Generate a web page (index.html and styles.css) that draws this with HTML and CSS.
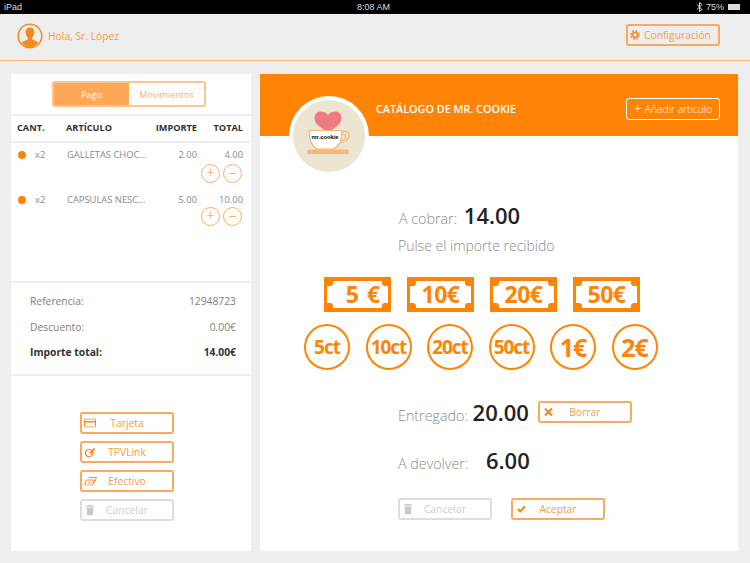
FILE: index.html
```html
<!DOCTYPE html>
<html lang="es">
<head>
    <meta charset="UTF-8">
    <title>Caja</title>
    <link rel="stylesheet" href="styles.css">
</head>
<body>
    <svg class="defs" width="0" height="0">
        <symbol id="bill-frame" viewBox="0 0 67 35">
            <path fill="#ff8405" fill-rule="evenodd" d="M0 0H67V35H0ZM7 4a4 4 0 0 1-4 4V27a4 4 0 0 1 4 4H60a4 4 0 0 1 4-4V8a4 4 0 0 1-4-4Z"/>
            <path fill="#ff8405" d="M3 3h6v3a3 3 0 0 1-3 3H3ZM58 3h6v6h-3a3 3 0 0 1-3-3ZM3 26h3a3 3 0 0 1 3 3v3H3ZM61 26h3v6h-6v-3a3 3 0 0 1 3-3Z"/>
        </symbol>
        <symbol id="trash" viewBox="0 0 8 11">
            <path fill="#c9c9c9" d="M3 0h2l.5 1H8v1.200H0V1h2.500ZM.6 3h6.800l-.5 8H1.100Z"/>
        </symbol>
    </svg>

    <div class="status-bar">
        <span class="status-left">iPad</span>
        <span class="status-time">8:08 AM</span>
        <span class="status-right">
            <svg width="7" height="10" viewBox="0 0 7 10"><path fill="none" stroke="#ddd" d="M1 2.500l5 5L3.500 9.500V.5L6 2.500l-5 5"/></svg>
            75%
            <span class="battery"></span>
        </span>
    </div>

    <header class="top-bar">
        <div class="greeting">
            <svg width="26" height="26" viewBox="0 0 26 26">
                <circle cx="13" cy="13" r="11.800" fill="none" stroke="#f58a1f" stroke-width="1.500"/>
                <path fill="#f58a1f" d="M13 4.500c3 0 4.500 2.300 4.300 5-.2 2.400-1 4.200-2.100 5.300v1.600c2.500 1 5 1.800 6 3.400A11.500 11.500 0 0 1 13 24.500a11.500 11.500 0 0 1-8.200-4.700c1-1.600 3.500-2.400 6-3.400v-1.600C9.700 13.700 8.900 11.900 8.700 9.500c-.2-2.700 1.300-5 4.300-5Z"/>
            </svg>
            <span>Hola, Sr. López</span>
        </div>
        <button class="btn btn-config">
            <svg width="10" height="10" viewBox="0 0 11 11">
                <circle cx="5.500" cy="5.500" r="4.200" fill="none" stroke="#f58a1f" stroke-width="2.400" stroke-dasharray="1.650 1.650"/>
                <circle cx="5.500" cy="5.500" r="2.800" fill="none" stroke="#f58a1f" stroke-width="1.600"/>
            </svg>
            Configuración
        </button>
    </header>

    <main class="content">
        <section class="card order">
            <div class="tabs-row">
                <div class="tabs">
                    <span class="tab tab-active">Pago</span>
                    <span class="tab">Movimientos</span>
                </div>
            </div>
            <div class="row head-row">
                <span class="col-qty">CANT.</span>
                <span class="col-name">ARTÍCULO</span>
                <span class="col-price">IMPORTE</span>
                <span class="col-total">TOTAL</span>
            </div>
            <div class="items">
                <div class="item">
                    <div class="row">
                        <span class="col-qty"><i class="dot"></i>x2</span>
                        <span class="col-name">GALLETAS CHOC...</span>
                        <span class="col-price">2.00</span>
                        <span class="col-total">4.00</span>
                    </div>
                    <div class="stepper">
                        <span class="round">+</span>
                        <span class="round">−</span>
                    </div>
                </div>
                <div class="item">
                    <div class="row">
                        <span class="col-qty"><i class="dot"></i>x2</span>
                        <span class="col-name">CAPSULAS NESC...</span>
                        <span class="col-price">5.00</span>
                        <span class="col-total">10.00</span>
                    </div>
                    <div class="stepper">
                        <span class="round">+</span>
                        <span class="round">−</span>
                    </div>
                </div>
            </div>
            <div class="summary">
                <div class="sum-row"><span>Referencia:</span><span>12948723</span></div>
                <div class="sum-row"><span>Descuento:</span><span>0.00€</span></div>
                <div class="sum-row sum-total"><span>Importe total:</span><span>14.00€</span></div>
            </div>
            <div class="pay-buttons">
                <button class="btn btn-wide">
                    <svg class="btn-icon" width="12" height="9" viewBox="0 0 12 9"><rect x=".5" y=".5" width="11" height="8" rx="1" fill="none" stroke="#f58a1f"/><rect x="1" y="2.500" width="10" height="1.500" fill="#f58a1f"/></svg>
                    Tarjeta
                </button>
                <button class="btn btn-wide">
                    <svg class="btn-icon" width="12" height="10" viewBox="0 0 12 10"><circle cx="5" cy="6" r="3.500" fill="none" stroke="#f58a1f" stroke-width="1.200"/><path fill="#f58a1f" d="M5 6l5-5 1.500 1L7 7Z"/></svg>
                    TPVLink
                </button>
                <button class="btn btn-wide">
                    <svg class="btn-icon" width="13" height="9" viewBox="0 0 13 9"><path fill="none" stroke="#f58a1f" d="M2.500 3.500h8l-2 5h-8ZM4.500 1h8l-2 5"/><circle cx="5.500" cy="6" r="1" fill="#f58a1f"/></svg>
                    Efectivo
                </button>
                <button class="btn btn-wide btn-off">
                    <svg class="btn-icon icon-inset" width="8" height="11"><use href="#trash"/></svg>
                    Cancelar
                </button>
            </div>
        </section>

        <section class="card catalog">
            <div class="catalog-head">
                <h2>CATÁLOGO DE MR. COOKIE</h2>
                <button class="btn btn-add"><span class="plus">+</span> Añadir artículo</button>
            </div>
            <div class="logo">
                <svg width="72" height="72" viewBox="0 0 72 72">
                    <circle cx="36" cy="36" r="36" fill="#ece5d2"/>
                    <path fill="#ee7b80" d="M35 32c-8-4.500-13.500-8.500-13.500-14 0-4 3-6.500 6.500-6.500 3 0 5.500 1.500 7 3.500 1.500-2 4-3.500 7-3.500 3.500 0 6.500 2.500 6.500 6.500 0 5.500-5.500 9.500-13.500 14Z"/>
                    <path fill="#fff" stroke="#f6b56d" stroke-width="1.200" d="M16 30.500h33c0 8-2.500 17-9.500 18.500h-14C18.500 47.500 16 38.500 16 30.500Z"/>
                    <path fill="none" stroke="#f6b56d" stroke-width="1.200" d="M49 32c4-1.500 7.500.5 7 4.500-.5 3-3.500 5-8 6.500M49 34.500c2.500-.5 4 .5 3.800 2.500-.2 2-2 3-4.800 4"/>
                    <rect x="14" y="49.500" width="42" height="4.500" rx="2.200" fill="#f8b873"/>
                    <text x="32" y="39" class="logo-text">mr.cookie</text>
                </svg>
            </div>
            <div class="till">
                <p class="line line-due">A cobrar: <b>14.00</b></p>
                <p class="hint">Pulse el importe recibido</p>
                <div class="bills">
                    <div class="bill"><svg><use href="#bill-frame"/></svg><span class="bill-five">5 €</span></div>
                    <div class="bill"><svg><use href="#bill-frame"/></svg><span>10€</span></div>
                    <div class="bill"><svg><use href="#bill-frame"/></svg><span>20€</span></div>
                    <div class="bill"><svg><use href="#bill-frame"/></svg><span>50€</span></div>
                </div>
                <div class="coins">
                    <span class="coin">5ct</span>
                    <span class="coin">10ct</span>
                    <span class="coin">20ct</span>
                    <span class="coin">50ct</span>
                    <span class="coin coin-euro">1€</span>
                    <span class="coin coin-euro">2€</span>
                </div>
                <div class="amount-row delivered">
                    <p class="line line-paid">Entregado: <b>20.00</b></p>
                    <button class="btn btn-wide">
                        <svg class="btn-icon icon-inset" width="9" height="9" viewBox="0 0 9 9"><path stroke="#f58a1f" stroke-width="2.400" d="M1 1l7 7M8 1L1 8"/></svg>
                        Borrar
                    </button>
                </div>
                <p class="line change">A devolver: <b>6.00</b></p>
                <div class="actions">
                    <button class="btn btn-wide btn-off">
                        <svg class="btn-icon icon-inset" width="8" height="11"><use href="#trash"/></svg>
                        Cancelar
                    </button>
                    <button class="btn btn-wide">
                        <svg class="btn-icon icon-inset" width="9" height="8" viewBox="0 0 11 9"><path fill="none" stroke="#f58a1f" stroke-width="2.600" d="M1 4.500l3 3 6-6.500"/></svg>
                        Aceptar
                    </button>
                </div>
            </div>
        </section>
    </main>
</body>
</html>
```

FILE: styles.css
```css
* {
    box-sizing: border-box;
}
html, body {
    margin: 0;
    padding: 0;
}
body {
    width: 750px;
    height: 563px;
    overflow: hidden;
    background-color: #eeeeee;
    font-family: "Open Sans", "Noto Sans", sans-serif;
    color: #333;
}
p, h2 {
    margin: 0;
}
.defs {
    display: block;
    height: 0;
}

/* status bar */
.status-bar {
    height: 14px;
    background-color: #000;
    color: #ddd;
    font-family: "Liberation Sans", sans-serif;
    font-size: 9px;
    line-height: 14px;
    display: grid;
    grid-template-columns: 1fr auto 1fr;
    padding: 0 10px 0 4px;
}
.status-time {
    margin-left: 3px;
}
.status-right {
    justify-self: end;
    display: flex;
    align-items: center;
    gap: 3px;
}
.battery {
    width: 12px;
    height: 6px;
    background-color: #ddd;
    margin-left: 1px;
}

/* top bar */
.top-bar {
    height: 47px;
    border-bottom: 1px solid #f7b877;
    display: flex;
    align-items: center;
    justify-content: space-between;
    padding: 0 30px 3px 17px;
}
.greeting {
    display: flex;
    align-items: center;
    gap: 5px;
    font-size: 10.300px;
    color: #f79a45;
}
.btn {
    height: 22px;
    padding: 0;
    border: 2px solid #f9aa62;
    border-radius: 3px;
    background-color: #fff;
    color: #f79a45;
    font-family: inherit;
    font-size: 10.300px;
    display: flex;
    align-items: center;
    justify-content: center;
}
.btn-config {
    width: 94px;
    background-color: transparent;
    justify-content: flex-start;
    padding-left: 2px;
    gap: 4px;
    margin-bottom: 1px;
}
.btn-wide {
    width: 94px;
    position: relative;
}
.btn-icon {
    position: absolute;
    left: 2px;
    top: 50%;
    transform: translateY(-50%);
}
.icon-inset {
    left: 4px;
}
.btn-off {
    border-color: #dedede;
    color: #cfcfcf;
}

/* columns */
.content {
    display: flex;
    gap: 9px;
    padding: 13px 12px 12px 11px;
}
.card {
    background-color: #fff;
    height: 477px;
}
.order {
    width: 240px;
    flex: none;
    display: flex;
    flex-direction: column;
}
.tabs-row {
    height: 42px;
    padding: 7px 0 0 41px;
    display: flex;
    border-bottom: 2px solid #efefef;
}
.tabs {
    width: 154px;
    height: 26px;
    border: 2px solid #fbc590;
    border-radius: 3px;
    display: flex;
    font-size: 9px;
    color: #fbb06c;
}
.tab {
    flex: 1;
    display: flex;
    align-items: center;
    justify-content: center;
}
.tab-active {
    flex: none;
    width: 75px;
    background-color: #ffa858;
    color: #fff;
}
.row {
    display: flex;
    font-size: 9.400px;
    line-height: 12px;
    color: #8a8a8a;
    padding: 0 8px 0 6px;
}
.head-row {
    height: 27px;
    padding-bottom: 1px;
    align-items: center;
    font-weight: 700;
    color: #333;
    font-size: 9.200px;
    border-bottom: 2px solid #efefef;
}
.col-qty {
    width: 49px;
    display: flex;
    align-items: center;
}
.col-name {
    width: 76px;
    white-space: nowrap;
}
.col-price {
    width: 55px;
    text-align: right;
}
.col-total {
    flex: 1;
    text-align: right;
}
.item .col-name {
    padding-left: 1px;
}
.item .col-qty {
    padding-left: 1px;
}
.items {
    height: 140px;
    padding-top: 6px;
    border-bottom: 2px solid #efefef;
}
.item {
    height: 45px;
}
.item + .item .stepper {
    padding-top: 1px;
}
.dot {
    width: 8px;
    height: 8px;
    border-radius: 50%;
    background-color: #ff8405;
    margin-right: 9px;
}
.stepper {
    display: flex;
    justify-content: flex-end;
    gap: 3px;
    padding: 3px 9px 0 0;
}
.round {
    width: 19px;
    height: 19px;
    border: 1px solid #f8ad68;
    border-radius: 50%;
    color: #f58a1f;
    font-size: 14px;
    font-weight: 300;
    line-height: 16px;
    text-align: center;
}
.summary {
    height: 93px;
    padding: 11px 15px 0 19px;
    border-bottom: 2px solid #efefef;
    font-size: 10.300px;
    color: #808080;
}
.sum-row {
    display: flex;
    justify-content: space-between;
    height: 25.500px;
    line-height: 14px;
}
.sum-total {
    font-weight: 700;
    color: #333;
}
.pay-buttons {
    display: flex;
    flex-direction: column;
    gap: 7px;
    padding: 36px 0 0 69px;
}

/* catalog */
.catalog {
    width: 478px;
    flex: none;
    position: relative;
}
.catalog-head {
    height: 62px;
    background-color: #ff8405;
    display: flex;
    align-items: center;
    justify-content: space-between;
    padding: 7px 18px 0 116px;
    color: #fff;
}
.catalog-head h2 {
    font-size: 10.800px;
    font-weight: 600;
}
.btn-add {
    width: 94px;
    background-color: transparent;
    border: 1px solid #fff;
    color: #fff;
    font-weight: 300;
    gap: 3px;
}
.plus {
    font-size: 14px;
    line-height: 12px;
}
.logo {
    position: absolute;
    left: 29px;
    top: 22px;
    width: 80px;
    height: 80px;
    border-radius: 50%;
    background-color: #fff;
    padding: 4px;
}
.logo svg {
    display: block;
}
.logo-text {
    font-family: "Liberation Sans", sans-serif;
    font-size: 5.800px;
    font-weight: 700;
    text-anchor: middle;
    fill: #000;
}
.till {
    padding-top: 64px;
}
.line {
    font-size: 14.300px;
    font-weight: 300;
    color: #8a8a8a;
}
.line b {
    font-size: 22px;
    font-weight: 600;
    color: #222;
    margin-left: 3px;
}
.line-paid b {
    margin-left: 1px;
}
.line-due {
    padding-left: 139px;
    line-height: 30px;
    height: 30px;
}
.hint {
    font-size: 14px;
    font-weight: 300;
    color: #8a8a8a;
    padding-left: 138px;
    line-height: 20px;
    margin-top: 6px;
}
.bills {
    display: flex;
    gap: 16px;
    padding: 21px 0 0 64px;
}
.bill {
    width: 67px;
    height: 35px;
    display: grid;
}
.bill svg, .bill span {
    grid-area: 1 / 1;
}
.bill svg {
    width: 67px;
    height: 35px;
}
.bill span {
    font-size: 23px;
    font-weight: 700;
    color: #ff8405;
    line-height: 35px;
    text-align: center;
    letter-spacing: -0.5px;
}
.bill .bill-five {
    padding-left: 11px;
    letter-spacing: 0;
    word-spacing: 2px;
}
.coins {
    display: flex;
    gap: 15.500px;
    padding: 12px 0 0 44px;
}
.coin {
    width: 46px;
    height: 46px;
    flex: none;
    border: 2px solid #ff8405;
    border-radius: 50%;
    color: #ff8405;
    font-size: 19px;
    font-weight: 700;
    letter-spacing: -1px;
    display: flex;
    align-items: center;
    justify-content: center;
}
.coin-euro {
    font-size: 25px;
}
.amount-row {
    display: flex;
    align-items: center;
    gap: 9px;
}
.delivered {
    padding: 27px 0 0 138px;
}
.change {
    padding: 18px 0 0 138px;
}
.change b {
    margin-left: 14px;
}
.actions {
    display: flex;
    gap: 19px;
    padding: 23px 0 0 138px;
}
```
